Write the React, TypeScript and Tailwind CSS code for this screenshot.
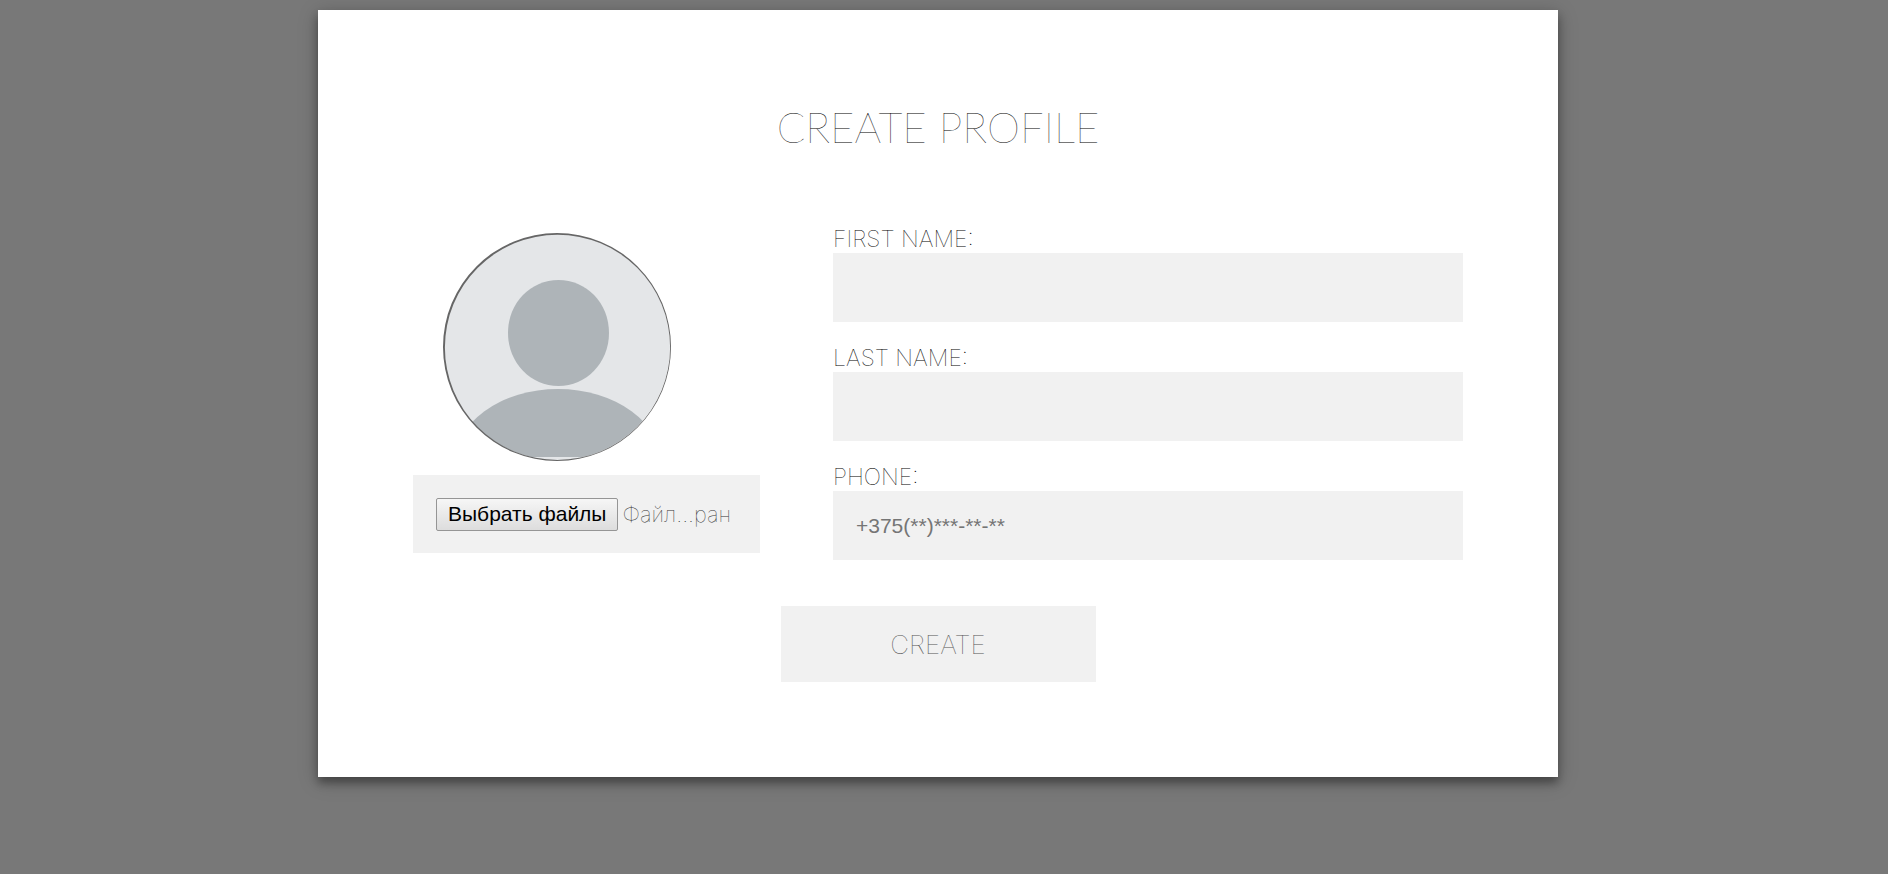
import { useId, useRef } from 'react';

function Avatar() {
  return (
    <svg viewBox="0 0 228 228" className="size-[228px]" role="img" aria-label="Profile picture">
      <defs>
        <clipPath id="avatar-clip">
          <circle cx="114" cy="114" r="113" />
        </clipPath>
      </defs>
      <g clipPath="url(#avatar-clip)">
        <rect width="228" height="228" fill="#e4e6e8" />
        <path
          d="M115.500 47C143 47 166 69.500 166 100C166 130 143 153 115.500 153C88 153 65 130 65 100C65 69.500 88 47 115.500 47Z"
          fill="#aeb4b8"
        />
        <path d="M11 232A104 76 0 0 1 219 232Z" fill="#aeb4b8" />
        <rect y="224" width="228" height="4" fill="#e4e6e8" />
      </g>
      <path
        fillRule="evenodd"
        d="M114 0a114 114 0 1 0 0 228a114 114 0 1 0 0-228ZM114.500 1.800a112.600 112.600 0 1 1 0 225.200a112.600 112.600 0 1 1 0-225.200Z"
        fill="#666"
      />
    </svg>
  );
}

function Field({ label, type = 'text', placeholder }: { label: string; type?: string; placeholder?: string }) {
  const id = useId();
  return (
    <div>
      <label htmlFor={id} className="block text-[23px] leading-7 font-thin text-black">
        {label}
      </label>
      <input
        id={id}
        type={type}
        placeholder={placeholder}
        className="block h-[69px] w-full bg-[#f1f1f1] px-[23px] font-['Liberation_Sans',sans-serif] text-[21px] text-[#333] placeholder:text-[#757575]"
      />
    </div>
  );
}

export default function App() {
  const fileRef = useRef<HTMLInputElement>(null);
  return (
    <div className="min-h-screen bg-[#787878] py-[10px] pr-3 font-['Inter',sans-serif]">
      <main className="mx-auto max-w-[1240px] bg-white px-[95px] pt-[93px] pb-[95px] shadow-[0_6px_8px_rgba(0,0,0,0.3),0_4px_18px_rgba(0,0,0,0.25)]">
        <h1 className="text-center font-['Lato',sans-serif] text-[42px] leading-12 font-thin text-black">CREATE PROFILE</h1>
        <form onSubmit={(e) => e.preventDefault()}>
          <div className="mt-[74px] flex justify-between">
            <div className="w-[33%] pt-2">
              <div className="pl-[30px]">
                <Avatar />
              </div>
              <div className="mt-[14px] flex h-[78px] items-center bg-[#f1f1f1] px-[23px]">
                <input ref={fileRef} id="photos" type="file" multiple tabIndex={-1} aria-label="Выбрать файлы" className="hidden" />
                <button
                  type="button"
                  onClick={() => fileRef.current?.click()}
                  className="h-[33px] shrink-0 rounded-[2px] border border-[#959595] bg-linear-to-b from-[#f6f6f6] to-[#dddddd] px-[11px] font-['Liberation_Sans',sans-serif] text-[21px] leading-[30px] text-black"
                >
                  Выбрать файлы
                </button>
                <span className="ml-1 text-[22px] font-thin whitespace-nowrap text-[#333]">Файл...ран</span>
              </div>
            </div>
            <div className="flex w-[60%] flex-col gap-[22px]">
              <Field label="FIRST NAME:" />
              <Field label="LAST NAME:" />
              <Field label="PHONE:" type="tel" placeholder="+375(**)***-**-**" />
            </div>
          </div>
          <button type="submit" className="mx-auto mt-[46px] block h-[76px] w-[30%] bg-[#f1f1f1] text-[26px] font-thin text-[#555]">
            CREATE
          </button>
        </form>
      </main>
    </div>
  );
}
